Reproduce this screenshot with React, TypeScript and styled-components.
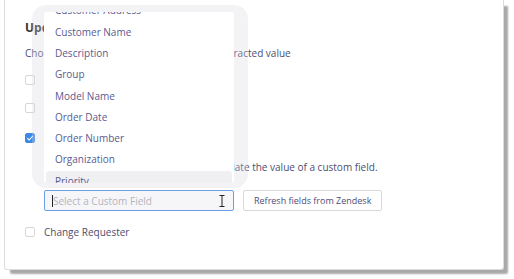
import styled, { createGlobalStyle } from "styled-components";

const GlobalStyle = createGlobalStyle`
  html, body {
    margin: 0;
    padding: 0;
    background: #ffffff;
  }
  body {
    font-family: "Open Sans", "Noto Sans", sans-serif;
    width: 514px;
    height: 279px;
    overflow: hidden;
  }
`;

const Page = styled.div`
  width: 514px;
  height: 279px;
  padding: 0 0 0 4px;
  box-sizing: border-box;
`;

const Panel = styled.div`
  position: relative;
  width: 500px;
  height: 270px;
  box-sizing: border-box;
  background: #fff;
  border: 1px solid #dcdcdc;
  border-top: none;
  border-radius: 0 0 3px 3px;
  box-shadow: 5px 5px 2px -1px #a8a8a8;
  padding: 19px 20px 0 20px;
  color: #4d4d6e;
`;

const Heading = styled.h3`
  margin: 0;
  font-size: 12px;
  font-weight: 700;
  color: #333;
  line-height: 18px;
`;

const Description = styled.p`
  margin: 8px 0 0 0;
  font-size: 10px;
  line-height: 16px;
`;

const OptionRow = styled.label<{ $gap: number }>`
  display: flex;
  align-items: center;
  gap: 9px;
  margin-top: ${(p) => p.$gap}px;
  font-size: 10px;
  line-height: 16px;
`;

const Box = styled.span<{ $checked?: boolean }>`
  width: 10px;
  height: 10px;
  border-radius: 2px;
  box-sizing: border-box;
  border: 1px solid ${(p) => (p.$checked ? "#3d8ae6" : "#d6d6d6")};
  background: ${(p) => (p.$checked ? "#3d8ae6" : "#fff")};
  display: flex;
  align-items: center;
  justify-content: center;
`;

const SubSection = styled.div`
  padding-left: 19px;
`;

const Hint = styled.p`
  margin: 13px 0 0 0;
  font-size: 10px;
  line-height: 16px;
`;

const FieldRow = styled.div`
  position: relative;
  display: flex;
  gap: 9px;
  margin-top: 15px;
`;

const SelectInput = styled.div`
  position: relative;
  width: 190px;
  height: 21px;
  box-sizing: border-box;
  border: 1px solid #6b9ee6;
  border-radius: 2px;
  background: #f6f6f8;
  display: flex;
  align-items: center;
  padding-left: 7px;
  font-size: 10px;
  color: #b4b4be;
`;

const Caret = styled.span`
  width: 1px;
  height: 12px;
  background: #222;
`;

const Beam = styled.svg`
  position: absolute;
  right: 8px;
  top: 4px;
`;

const Button = styled.button`
  height: 21px;
  padding: 0 10px;
  border: 1px solid #d9d9d9;
  border-radius: 2px;
  background: #fff;
  font-family: "Open Sans", "Noto Sans", sans-serif;
  font-size: 9px;
  color: #4d4d7a;
`;

const Frame = styled.div`
  position: absolute;
  left: -12px;
  bottom: 23px;
  width: 216px;
  height: 183px;
  box-sizing: border-box;
  padding: 7px 14px 5px 12px;
  border-radius: 14px;
  background: rgba(215, 215, 225, 0.3);
  z-index: 2;
`;

const List = styled.ul`
  margin: 0;
  padding: 0;
  list-style: none;
  height: 100%;
  background: #fff;
  border-radius: 3px;
  overflow: hidden;
  position: relative;
`;

const ListInner = styled.div`
  position: absolute;
  left: 2px;
  right: 2px;
  bottom: -9px;
`;

const Item = styled.li<{ $hover?: boolean }>`
  height: 21.3px;
  line-height: 21.3px;
  padding-left: 9px;
  font-size: 10px;
  color: #5a5a90;
  background: ${(p) => (p.$hover ? "#f0f0f3" : "transparent")};
  border-radius: 3px;
`;

const fields = [
  "Customer Email",
  "Customer Address",
  "Customer Name",
  "Description",
  "Group",
  "Model Name",
  "Order Date",
  "Order Number",
  "Organization",
  "Priority",
];

const Check = () => (
  <svg width="8" height="8" viewBox="0 0 8 8">
    <path d="M1.3 4.2 L3.2 6 L6.8 2" fill="none" stroke="#fff" strokeWidth="1.1" />
  </svg>
);

export default function App() {
  return (
    <Page>
      <GlobalStyle />
      <Panel>
        <Heading>Update Ticket Fields</Heading>
        <Description>Choose how to update the ticket with the extracted value</Description>
        <OptionRow $gap={11}>
          <Box />
          Change Status
        </OptionRow>
        <OptionRow $gap={12}>
          <Box />
          Change Priority
        </OptionRow>
        <OptionRow $gap={14}>
          <Box $checked>
            <Check />
          </Box>
          Custom Field
        </OptionRow>
        <SubSection>
          <Hint>Select a custom field below and we'll update the value of a custom field.</Hint>
          <FieldRow>
            <Frame>
              <List>
                <ListInner>
                  {fields.map((f) => (
                    <Item key={f} $hover={f === "Priority"}>
                      {f}
                    </Item>
                  ))}
                </ListInner>
              </List>
            </Frame>
            <SelectInput>
              <Caret />
              Select a Custom Field
              <Beam width="6" height="12" viewBox="0 0 6 12">
                <path d="M0.5 0.5 H5.5 M3 0.5 V11.5 M0.5 11.5 H5.5" stroke="#222" strokeWidth="1" fill="none" />
              </Beam>
            </SelectInput>
            <Button>Refresh fields from Zendesk</Button>
          </FieldRow>
        </SubSection>
        <OptionRow $gap={13}>
          <Box />
          Change Requester
        </OptionRow>
      </Panel>
    </Page>
  );
}
